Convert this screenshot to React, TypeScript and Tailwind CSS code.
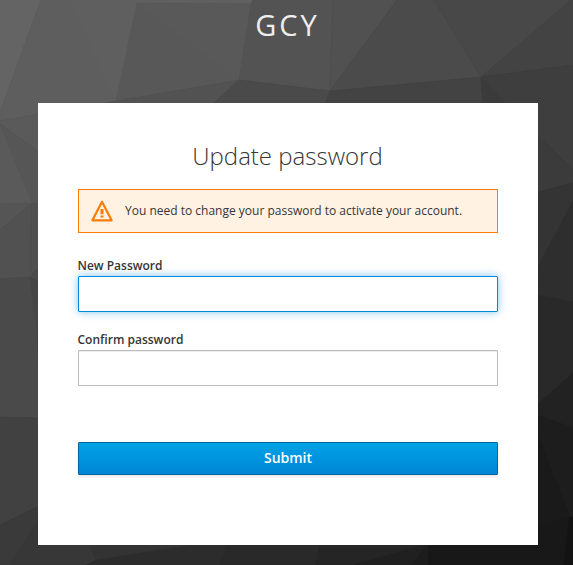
const facets: [string, string][] = [
  ['#646464', '0,0 41,0 1,110 0,121'],
  ['#5e5e5e', '41,0 135,0 137,3 116,101 0,121 0,112'],
  ['#5f5f5f', '70,0 135,0 137,3 116,101 112,94'],
  ['#606060', '133,0 253,0 251,4 137,3'],
  ['#585858', '137,3 251,4 239,80 116,101'],
  ['#595959', '137,3 251,4 239,80'],
  ['#525252', '116,101 239,80 213,104 100,104'],
  ['#535353', '253,0 333,0 330,91 239,80 251,4'],
  ['#4a4a4a', '239,80 330,91 325,104 213,104'],
  ['#515151', '333,0 397,0 330,91'],
  ['#4b4b4b', '397,0 434,0 481,77 330,91'],
  ['#484848', '434,0 573,0 481,77'],
  ['#434343', '571,0 573,0 573,65 481,77'],
  ['#434343', '330,91 481,77 483,104 325,104'],
  ['#3e3e3e', '481,77 573,65 573,170 538,136 507,104 483,104'],
  ['#3b3b3b', '481,77 507,104 483,104'],
  ['#5a5a5a', '0,121 38,114 38,151 0,124'],
  ['#565656', '0,124 38,151 38,203 32,203'],
  ['#5a5a5a', '0,124 32,203 0,203'],
  ['#555555', '0,203 32,203 0,230'],
  ['#515151', '0,230 32,203 30,277 0,279'],
  ['#505050', '32,203 39,203 39,267 30,277'],
  ['#4b4b4b', '30,277 39,267 39,281'],
  ['#4a4a4a', '0,279 30,277 37,330 39,418 0,417'],
  ['#464646', '30,277 39,281 39,340 37,330'],
  ['#414141', '0,417 39,418 39,506 0,525'],
  ['#3a3a3a', '0,525 39,506 39,520 10,565 0,565'],
  ['#373737', '39,520 39,544 90,544 96,560 86,565 10,565'],
  ['#3b3b3b', '538,136 573,170 573,183 538,192'],
  ['#343434', '538,192 573,183 573,201 538,267'],
  ['#2e2e2e', '573,201 573,302 538,295 538,267'],
  ['#292929', '538,295 573,302 573,373 537,405'],
  ['#222222', '573,373 573,428 537,415 537,405'],
  ['#1d1d1d', '537,415 573,428 573,520 568,515 537,433'],
  ['#1a1a1a', '537,433 569,516 537,523'],
  ['#181818', '537,523 570,516 564,565 428,565 428,544 537,544'],
  ['#131313', '570,516 573,518 573,565 564,565'],
  ['#333333', '90,544 200,544 96,560'],
  ['#2c2c2c', '96,560 200,544 228,544 220,565 86,565'],
  ['#292929', '228,544 320,544 316,565 220,565'],
  ['#252525', '320,544 428,544 353,565 316,565'],
  ['#202020', '428,544 411,565 353,565'],
  ['#1c1c1c', '428,544 428,565 411,565'],
]

function Backdrop() {
  return (
    <svg className="absolute inset-0 h-full w-full" viewBox="0 0 573 565" aria-hidden="true">
      {facets.map(([fill, points], i) => (
        <polygon key={i} points={points} fill={fill} stroke={fill} strokeWidth="0.5" />
      ))}
    </svg>
  )
}

function WarningIcon() {
  return (
    <svg className="h-[22px] w-[22px] shrink-0" viewBox="0 0 22 22" fill="none">
      <path d="M11 1.8 20.6 20.3H1.4Z" stroke="#fa7b05" strokeWidth="2.2" strokeLinejoin="round" />
      <path d="M9.5 9h3v5.2h-3ZM9.5 15.4h3v2.1h-3Z" fill="#fa7b05" />
    </svg>
  )
}

export default function App() {
  return (
    <div className="relative h-[565px] w-[573px] overflow-hidden bg-[#393939] font-['Open_Sans','Noto_Sans',sans-serif] text-[12px] text-[#363636]">
      <Backdrop />
      <div className="relative">
        <header className="flex h-[103px] justify-center pt-[5px] text-[29px] leading-[40px] tracking-[3px] text-[#eeeeee]">
          <span className="-mr-[2px]">GCY</span>
        </header>
        <main className="ml-[38px] h-[442px] w-[500px] bg-white px-10 pt-[37px]">
          <h1 className="-ml-px text-center text-[24px] leading-[32px] font-light">Update password</h1>
          <div className="mt-[17px] flex h-[44px] items-center border border-[#f97b0c] bg-[#fff2e3] pl-[12px]">
            <WarningIcon />
            <span className="ml-[12px]">You need to change your password to activate your account.</span>
          </div>
          <form onSubmit={(e) => e.preventDefault()}>
            <label htmlFor="new" className="mt-[23px] -ml-[0.5px] block h-5 leading-5 font-semibold">New Password</label>
            <input id="new" type="password" className="block h-[36px] w-full rounded-[1px] border border-[#0088dd] bg-white px-2 shadow-[0_0_8px_rgba(0,136,221,0.5)] outline-none" />
            <label htmlFor="confirm" className="mt-[18px] -ml-[0.5px] block h-5 leading-5 font-semibold">Confirm password</label>
            <input id="confirm" type="password" className="block h-[36px] w-full rounded-[1px] border border-[#bbbbbb] bg-white px-2 shadow-[inset_0_1px_1px_rgba(3,3,3,0.075)] outline-none" />
            <button className="mt-[56px] block h-[33px] w-full rounded-[1px] border border-[#00659c] bg-linear-to-b from-[#00a3e6] to-[#0085d6] pb-[2px] text-[14px] leading-[29px] font-semibold text-white shadow-[0_2px_3px_rgba(3,3,3,0.1)]">Submit</button>
          </form>
        </main>
      </div>
    </div>
  )
}
